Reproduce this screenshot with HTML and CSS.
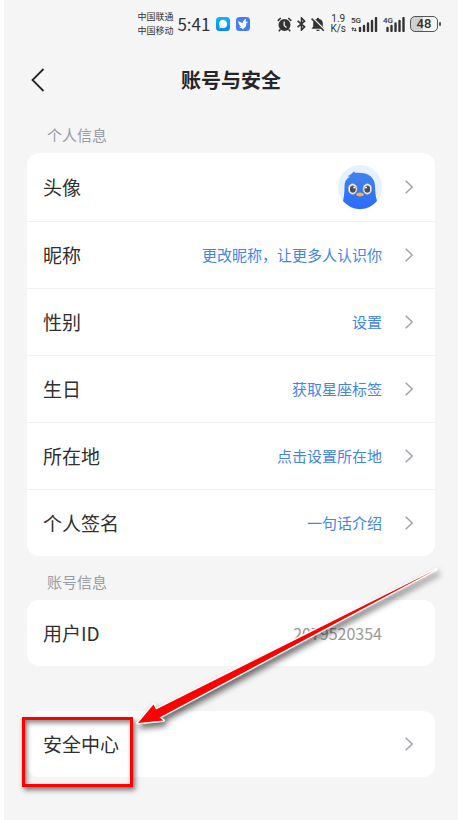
FILE: index.html
```html
<!DOCTYPE html>
<html lang="zh-CN">
<head>
<meta charset="utf-8">
<meta name="viewport" content="width=device-width, initial-scale=1">
<title>账号与安全</title>
<link rel="stylesheet" href="styles.css">
</head>
<body>
<div class="phone">
  <div class="status">
    <div class="group">
      <div class="carriers"><span>中国联通</span><span>中国移动</span></div>
      <span class="time">5:41</span>
      <svg class="app" width="14" height="14" viewBox="0 0 14 14"><defs><linearGradient id="chat" x2="0" y2="1"><stop stop-color="#10b4ff"/><stop offset="1" stop-color="#0589f5"/></linearGradient></defs><rect width="14" height="14" rx="3.5" fill="url(#chat)"/><path d="M7 2.8a4.2 4.2 0 1 1-1.800 8l-2 .5.5-1.900A4.200 4.200 0 0 1 7 2.800z" fill="#fff"/><path d="M4.600 8.200a3 3 0 0 0 4.800 0" fill="none" stroke="#b9e7ff" stroke-width=".8"/></svg>
      <svg class="app" width="14" height="14" viewBox="0 0 14 14"><rect width="14" height="14" rx="3.5" fill="#437df5"/><path d="M2.300 4l4.300 2.200C6.900 4.200 8.300 2.400 10 1.800l-.3 2.600 2.500.7-2 1.100c.3 2.400-.5 4.300-2.400 4.900l-.7 1.400-1.500-1.600-2.400.1 1.700-1.500C3.300 8.600 2.300 6.400 2.300 4z" fill="#fff"/></svg>
    </div>
    <div class="group system">
      <svg width="15" height="15" viewBox="0 0 15 15"><circle cx="7.500" cy="8" r="6" fill="#333"/><path d="M.8 3.800L3.700 1M14.200 3.800L11.300 1M3.300 12.500l-1.500 1.800M11.700 12.500l1.500 1.800" stroke="#333" stroke-width="1.600"/><path d="M7.200 4.500v4l2.300 2" fill="none" stroke="#f5f5f5" stroke-width="1.300"/></svg>
      <svg width="9" height="14" viewBox="0 0 9 14"><path d="M.6 3.800l7 6L4.500 13V1l3.100 3.200-7 6" fill="none" stroke="#333" stroke-width="1.600"/></svg>
      <svg width="14" height="15" viewBox="0 0 14 15"><path d="M7 .8c.7 0 1.100.4 1.200 1.100 2.400.5 3.600 2.200 3.600 4.300v3.400l1.700 2.200H.5l1.700-2.200V6.200c0-2.100 1.200-3.800 3.600-4.300C5.900 1.200 6.300.8 7 .8zM5.200 12.700h3.600c-.2 1.800-3.400 1.800-3.600 0z" fill="#333"/><path d="M1.600.7l12 12" stroke="#f5f5f5" stroke-width="1.500"/><path d="M.6 1.600l12.200 12.200" stroke="#333" stroke-width="1.500"/></svg>
      <div class="speed"><span>1.9</span><span>K/s</span></div>
      <div class="signal"><span>5G</span><svg width="27" height="15" viewBox="0 0 27 15"><path d="M1.800 14v-3M4.300 11v3M.7 11.800l1.100-1.200 1.100 1.200M3.200 13l1.100 1.200L5.400 13" fill="none" stroke="#333"/><path d="M9 14v-3M13 14V9M17 14V6.500M21 14V4M25 14V1" stroke="#333" stroke-width="2.400" stroke-linecap="round"/></svg></div>
      <div class="signal"><span>4G</span><svg width="22" height="15" viewBox="0 0 22 15"><path d="M4.500 14v-3M8.500 14V9M12.500 14V6.500M16.500 14V4M20.500 14V1" stroke="#333" stroke-width="2.400" stroke-linecap="round"/></svg></div>
      <div class="battery">48</div>
    </div>
  </div>

  <header class="nav">
    <button class="back" aria-label="返回"><svg width="14" height="24" viewBox="0 0 14 24"><path d="M12.500 1L1.500 12l11 11" fill="none" stroke="#25262c" stroke-width="1.800"/></svg></button>
    <h1>账号与安全</h1>
  </header>

  <main>
    <h2>个人信息</h2>
    <div class="card profile">
      <button class="row"><span>头像</span><span class="value">
        <svg class="avatar" width="44" height="44" viewBox="0 0 44 44"><defs><linearGradient id="bird" x2="0" y2="1"><stop stop-color="#4285e9"/><stop offset="1" stop-color="#2b6bfc"/></linearGradient></defs><circle cx="22" cy="22" r="22" fill="#e5f1fe"/><path d="M5 36c1.500-6 1.300-10 1.600-16C7 15.500 9 13.300 12 11.700c-1.300.2-2-.1-2.300-.9 1.300-.1 2-.6 2.900-1.300 1.100-.9 2.300-2.200 3.700-3.300.3 1 .8 1.500 2 1.600C29 7 36.500 11.500 37 20.500c.3 6 .2 10 2 15.500a22 22 0 0 1-34 0z" fill="url(#bird)"/><g stroke="#c5b68d" stroke-width=".8" fill="#fff"><ellipse cx="14.700" cy="24" rx="4.300" ry="5.200"/><ellipse cx="29.300" cy="24" rx="4.300" ry="5.200"/></g><ellipse cx="14.800" cy="24.200" rx="2.900" ry="3.600" fill="#4c5055"/><ellipse cx="29.300" cy="24.200" rx="2.900" ry="3.600" fill="#4c5055"/><circle cx="16.200" cy="22.500" r="1" fill="#fff"/><circle cx="28" cy="22.500" r="1" fill="#fff"/><path d="M18 29.500c1.500-2.800 6.500-2.800 8 0-.8 2.600-7 2.600-8 0z" fill="#f5b63b"/></svg>
      </span><svg class="chevron" viewBox="0 0 8 14"><path d="M.7.7L7.200 7 .7 13.300"/></svg></button>
      <button class="row"><span>昵称</span><span class="value">更改昵称，让更多人认识你</span><svg class="chevron" viewBox="0 0 8 14"><path d="M.7.7L7.200 7 .7 13.300"/></svg></button>
      <button class="row"><span>性别</span><span class="value">设置</span><svg class="chevron" viewBox="0 0 8 14"><path d="M.7.7L7.200 7 .7 13.300"/></svg></button>
      <button class="row"><span>生日</span><span class="value">获取星座标签</span><svg class="chevron" viewBox="0 0 8 14"><path d="M.7.7L7.200 7 .7 13.300"/></svg></button>
      <button class="row"><span>所在地</span><span class="value">点击设置所在地</span><svg class="chevron" viewBox="0 0 8 14"><path d="M.7.7L7.200 7 .7 13.300"/></svg></button>
      <button class="row"><span>个人签名</span><span class="value">一句话介绍</span><svg class="chevron" viewBox="0 0 8 14"><path d="M.7.7L7.200 7 .7 13.300"/></svg></button>
    </div>
    <h2>账号信息</h2>
    <div class="card">
      <div class="row"><span>用户ID</span><span class="value id">2079520354</span></div>
    </div>
    <div class="card security">
      <button class="row"><span>安全中心</span><span class="value"></span><svg class="chevron" viewBox="0 0 8 14"><path d="M.7.7L7.200 7 .7 13.300"/></svg></button>
      <div class="highlight"></div>
      <svg class="arrow" width="310" height="170" viewBox="0 0 310 170"><path d="M304 10.500L24 150.500 21.500 145.500 6 164l25.500-2.500-4-3z" fill="#fff" stroke="#fff" stroke-width="3" stroke-linejoin="round"/><path d="M304 10.500L24 150.500 21.500 145.500 6 164l25.500-2.500-4-3z" fill="#f00"/></svg>
    </div>
  </main>
</div>
</body>
</html>
```
FILE: styles.css
```css
* { box-sizing: border-box; }
body {
  margin: 0;
  background: #fff;
  color: #303030;
  font-family: "Noto Sans CJK SC", sans-serif;
}
.phone {
  min-height: 100vh;
  margin-left: 4px;
  background: #f5f5f5;
  overflow: hidden;
}
button {
  border: 0;
  padding: 0;
  background: none;
  color: inherit;
  font: inherit;
  text-align: left;
}
svg { display: block; flex: none; }

.status {
  display: flex;
  justify-content: flex-end;
  height: 48px;
  padding-right: 17px;
  color: #333;
}
.group { display: flex; align-items: center; gap: 6px; }
.system { margin-left: 27px; gap: 5px; }
.carriers {
  display: flex;
  flex-direction: column;
  margin-right: -2px;
  font-size: 9px;
  line-height: 14px;
}
.time { font-size: 17px; line-height: 24px; }
.speed {
  display: flex;
  flex-direction: column;
  align-items: center;
  font: 10px/10px Roboto, sans-serif;
}
.signal { position: relative; }
.signal span {
  position: absolute;
  top: 0;
  left: 0;
  font: 500 8px/8px Roboto, sans-serif;
}
.battery {
  position: relative;
  width: 28px;
  height: 16px;
  margin-right: 3px;
  border: 1px solid #555;
  border-radius: 5px;
  background: linear-gradient(90deg, #d0d0d0 48%, #f5f5f5 48%);
  font: 500 13px/14px Roboto, sans-serif;
  text-align: center;
}
.battery::after {
  content: "";
  position: absolute;
  top: 5px;
  right: -4px;
  width: 2px;
  height: 4px;
  border-radius: 1px;
  background: #555;
}

.nav {
  display: grid;
  grid-template-columns: 40px 1fr 40px;
  align-items: center;
  height: 61px;
  padding: 2px 0 0;
}
.back { padding-left: 27px; }
h1 {
  margin: 0;
  color: #25262c;
  font-size: 20px;
  line-height: 30px;
  text-align: center;
}

main { padding: 0 23px 43px; }
h2 {
  margin: 0;
  padding: 8px 20px 0;
  color: #989ca7;
  font-size: 15px;
  font-weight: 400;
  line-height: 36px;
}
.card { border-radius: 12px; background: #fff; }
.row {
  display: flex;
  align-items: center;
  width: 100%;
  height: 66px;
  padding: 0 22px 1px 16px;
  font-size: 19px;
}
.profile .row { height: 67px; }
.profile .row:first-child { height: 68px; }
.profile .row + .row { border-top: 1px solid #f2f2f2; }
.value {
  display: flex;
  flex: 1;
  justify-content: flex-end;
  margin-right: 23px;
  color: #4284ec;
  font-size: 15px;
}
.value.id { margin-right: 31px; color: #999; font-size: 16px; }
.chevron {
  width: 8px;
  height: 14px;
  fill: none;
  stroke: #a0a3ad;
  stroke-width: 1.5;
}

.security { position: relative; margin-top: 45px; }
.highlight {
  position: absolute;
  top: 6px;
  left: -5px;
  width: 111px;
  height: 70px;
  border: 3px solid #f00;
  box-shadow: 2px 3px 5px #0008, inset 2px 3px 5px #0007;
  pointer-events: none;
}
.arrow {
  position: absolute;
  bottom: 48px;
  left: 105px;
  overflow: visible;
  filter: drop-shadow(2px 4px 3px #0009);
  pointer-events: none;
}
```
